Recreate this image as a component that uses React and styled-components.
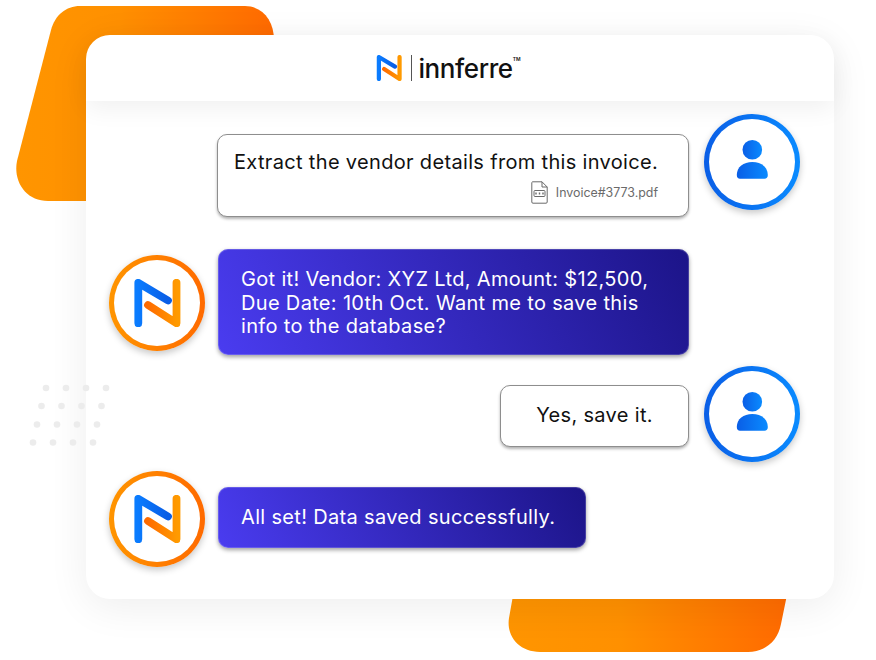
import React from "react";
import styled, { createGlobalStyle } from "styled-components";

const Global = createGlobalStyle`
  html, body { margin: 0; padding: 0; background: #fff; }
  body { font-family: Inter, "Liberation Sans", sans-serif; }
`;

const Stage = styled.div`
  position: relative;
  width: 876px;
  height: 660px;
  overflow: hidden;
  padding: 35px 42px 0 86px;
  box-sizing: border-box;
`;

const Blobs = styled.svg`
  position: absolute;
  left: 0;
  top: 0;
  width: 876px;
  height: 660px;
`;

const Dots = styled.svg`
  position: absolute;
  left: 25px;
  top: 380px;
  width: 90px;
  height: 72px;
  z-index: 2;
`;

const Card = styled.main`
  position: relative;
  z-index: 1;
  width: 748px;
  height: 564px;
  border-radius: 24px;
  background: #fff;
  box-shadow: 0 8px 40px rgba(0, 0, 0, 0.07);
  display: flex;
  flex-direction: column;
`;

const Header = styled.header`
  height: 66px;
  flex: none;
  border-radius: 24px 24px 0 0;
  box-shadow: 0 8px 24px rgba(0, 0, 0, 0.06);
  display: flex;
  align-items: center;
  justify-content: center;
  gap: 7px;
  padding-right: 23px;
  box-sizing: border-box;
`;

const Divider = styled.span`
  width: 1px;
  height: 26px;
  background: #555;
  margin-left: 2px;
  margin-right: -1px;
`;

const Brand = styled.span`
  font-size: 26px;
  font-weight: 500;
  color: #111;
  letter-spacing: -0.4px;
  line-height: 1;
  display: flex;
  margin-top: 1px;
`;

const Tm = styled.sup`
  font-size: 5px;
  font-weight: 600;
  line-height: 1;
  margin: 1px 0 0 0;
  letter-spacing: 0;
`;

const Chat = styled.section`
  display: flex;
  flex-direction: column;
  padding: 13px 34px 0 23px;
`;

const Row = styled.div`
  display: flex;
  align-items: flex-start;
  justify-content: ${(p) => (p.$user ? "flex-end" : "flex-start")};
  gap: ${(p) => (p.$user ? "15px" : "13px")};
  margin-bottom: ${(p) => p.$after || 0}px;
`;

const Avatar = styled.div`
  width: 96px;
  height: 96px;
  flex: none;
  box-sizing: border-box;
  border-radius: 50%;
  border: 5px solid transparent;
  background:
    linear-gradient(#fff, #fff) padding-box,
    ${(p) =>
        p.$user
          ? "linear-gradient(90deg, #0a5ee6, #0a8bff)"
          : "linear-gradient(90deg, #ff9500, #ff6a00)"}
      border-box;
  box-shadow: 0 3px 7px rgba(0, 0, 0, 0.22);
  display: flex;
  align-items: center;
  justify-content: center;
  margin-top: ${(p) => p.$top || 0}px;
`;

const Bubble = styled.div`
  box-sizing: border-box;
  width: ${(p) => p.$width}px;
  height: ${(p) => p.$height}px;
  margin-top: ${(p) => p.$top || 0}px;
  border-radius: 10px;
  font-size: 20px;
  letter-spacing: 0.33px;
  line-height: 24px;
  ${(p) =>
    p.$bot
      ? `
    background: linear-gradient(62deg, #4a3cf0 0%, #1c1488 100%);
    color: #fff;
    line-height: 23.5px;
    padding: ${p.$pad || "15px 23px"};
    box-shadow: inset 0 0 0 1px rgba(255,255,255,0.18), 0 2px 4px rgba(0,0,0,0.38);
  `
      : `
    background: #fff;
    color: #111;
    border: 1px solid #8e8e8e;
    padding: ${p.$pad || "15px 16px"};
    box-shadow: 0 2px 3px rgba(0,0,0,0.3);
  `}
`;

const Attachment = styled.div`
  display: flex;
  align-items: center;
  justify-content: flex-end;
  gap: 8px;
  margin-top: 8px;
  font-size: 12.4px;
  letter-spacing: 0;
  color: #6a6a6a;
  padding-right: 14px;
  line-height: 22px;
`;

const FileGlyph = styled.span`
  display: flex;
  margin-top: -2px;
`;

const Centered = styled.span`
  display: block;
  text-align: center;
`;

const UserIcon = () => (
  <svg width="34" height="44" viewBox="0 0 34 44">
    <defs>
      <linearGradient id="ug" x1="0" y1="0" x2="1" y2="0">
        <stop offset="0" stopColor="#0a5ee6" />
        <stop offset="1" stopColor="#0a8bff" />
      </linearGradient>
    </defs>
    <circle cx="17.3" cy="9.8" r="9.8" fill="url(#ug)" />
    <path
      d="M1.8 35 C1.8 27 8.5 22 17.3 22 C26 22 32.8 27 32.8 35 C32.8 37.5 31.5 38.8 29.5 38.8 H5 C3 38.8 1.8 37.5 1.8 35 Z"
      fill="url(#ug)"
    />
  </svg>
);

const NMark = ({ size, id }) => (
  <svg width={size} height={size} viewBox="0 0 48 48">
    <defs>
      <linearGradient id={id + "b"} gradientUnits="userSpaceOnUse" x1="4" y1="0" x2="34" y2="0">
        <stop offset="0" stopColor="#0a7cff" />
        <stop offset="1" stopColor="#0a5ee6" />
      </linearGradient>
      <linearGradient id={id + "o"} gradientUnits="userSpaceOnUse" x1="14" y1="0" x2="44" y2="0">
        <stop offset="0" stopColor="#ff6a00" />
        <stop offset="1" stopColor="#ff9a00" />
      </linearGradient>
    </defs>
    <path d="M43.5 3.8 V44.3 L15 26" fill="none" stroke={`url(#${id}o)`} strokeWidth="7.8" strokeLinecap="round" strokeLinejoin="round" />
    <path d="M5.3 44.3 V3.8 L35 21.5" fill="none" stroke={`url(#${id}b)`} strokeWidth="7.8" strokeLinecap="round" strokeLinejoin="round" />
  </svg>
);

const PdfIcon = () => (
  <svg width="17" height="23" viewBox="0 0 17 23" fill="none" stroke="#6a6a6a" strokeWidth="1">
    <path d="M1.5 0.8 H11 L16.2 6 V21 A1.2 1.2 0 0 1 15 22.2 H2 A1.2 1.2 0 0 1 0.8 21 V2 A1.2 1.2 0 0 1 1.5 0.8 Z" />
    <path d="M11 0.8 V6 H16.2" />
    <rect x="3" y="9.5" width="11" height="6" rx="1" />
    <path d="M5 11.5 V13.5 M8.5 11.5 V13.5 M12 11.5 V13.5" strokeWidth="1.4" />
  </svg>
);

const dotRows = [
  [21, 8],
  [16.5, 26],
  [12, 44.5],
  [8, 62.5],
];

export default function App() {
  return (
    <>
      <Global />
      <Stage>
        <Blobs viewBox="0 0 876 660">
          <defs>
            <linearGradient id="t" x1="0" y1="0" x2="1" y2="0">
              <stop offset="0" stopColor="#ff9500" />
              <stop offset="0.4" stopColor="#ff9000" />
              <stop offset="1" stopColor="#ff6a00" />
            </linearGradient>
          </defs>
          <path
            d="M80 6 H245 C262 6 274 20 274 40 V201 H48 C26 201 13 182 17 161 L51 30 C55 15 66 6 80 6 Z"
            fill="url(#t)"
          />
          <path
            d="M514 590 H788 L781 624 C778 641 765 652 748 652 H540 C520 652 506 637 509 618 Z"
            fill="url(#t)"
          />
        </Blobs>
        <Dots viewBox="0 0 90 72">
          {dotRows.flatMap(([x, y]) =>
            [0, 20, 40, 60].map((d) => (
              <circle key={`${x}-${d}`} cx={x + d} cy={y} r="3.3" fill="#ececec" />
            ))
          )}
        </Dots>
        <Card>
          <Header>
            <NMark size={26} id="h" />
            <Divider />
            <Brand>
              innferre<Tm>TM</Tm>
            </Brand>
          </Header>
          <Chat>
            <Row $user $after={32}>
              <Bubble $width={472} $height={83} $top={20}>
                Extract the vendor details from this invoice.
                <Attachment>
                  <FileGlyph>
                    <PdfIcon />
                  </FileGlyph>
                  Invoice#3773.pdf
                </Attachment>
              </Bubble>
              <Avatar $user>
                <UserIcon />
              </Avatar>
            </Row>
            <Row $after={11}>
              <Avatar $top={6}>
                <NMark size={48} id="a" />
              </Avatar>
              <Bubble $bot $width={471} $height={106} $pad="19px 23px">
                Got it! Vendor: XYZ Ltd, Amount: $12,500,
                <br />
                Due Date: 10th Oct. Want me to save this
                <br />
                info to the database?
              </Bubble>
            </Row>
            <Row $user $after={9}>
              <Bubble $width={189} $height={62} $top={19} $pad="17px 16px">
                <Centered>Yes, save it.</Centered>
              </Bubble>
              <Avatar $user>
                <UserIcon />
              </Avatar>
            </Row>
            <Row>
              <Avatar>
                <NMark size={48} id="c" />
              </Avatar>
              <Bubble $bot $width={368} $height={61} $top={16} $pad="19px 23px">
                All set! Data saved successfully.
              </Bubble>
            </Row>
          </Chat>
        </Card>
      </Stage>
    </>
  );
}
